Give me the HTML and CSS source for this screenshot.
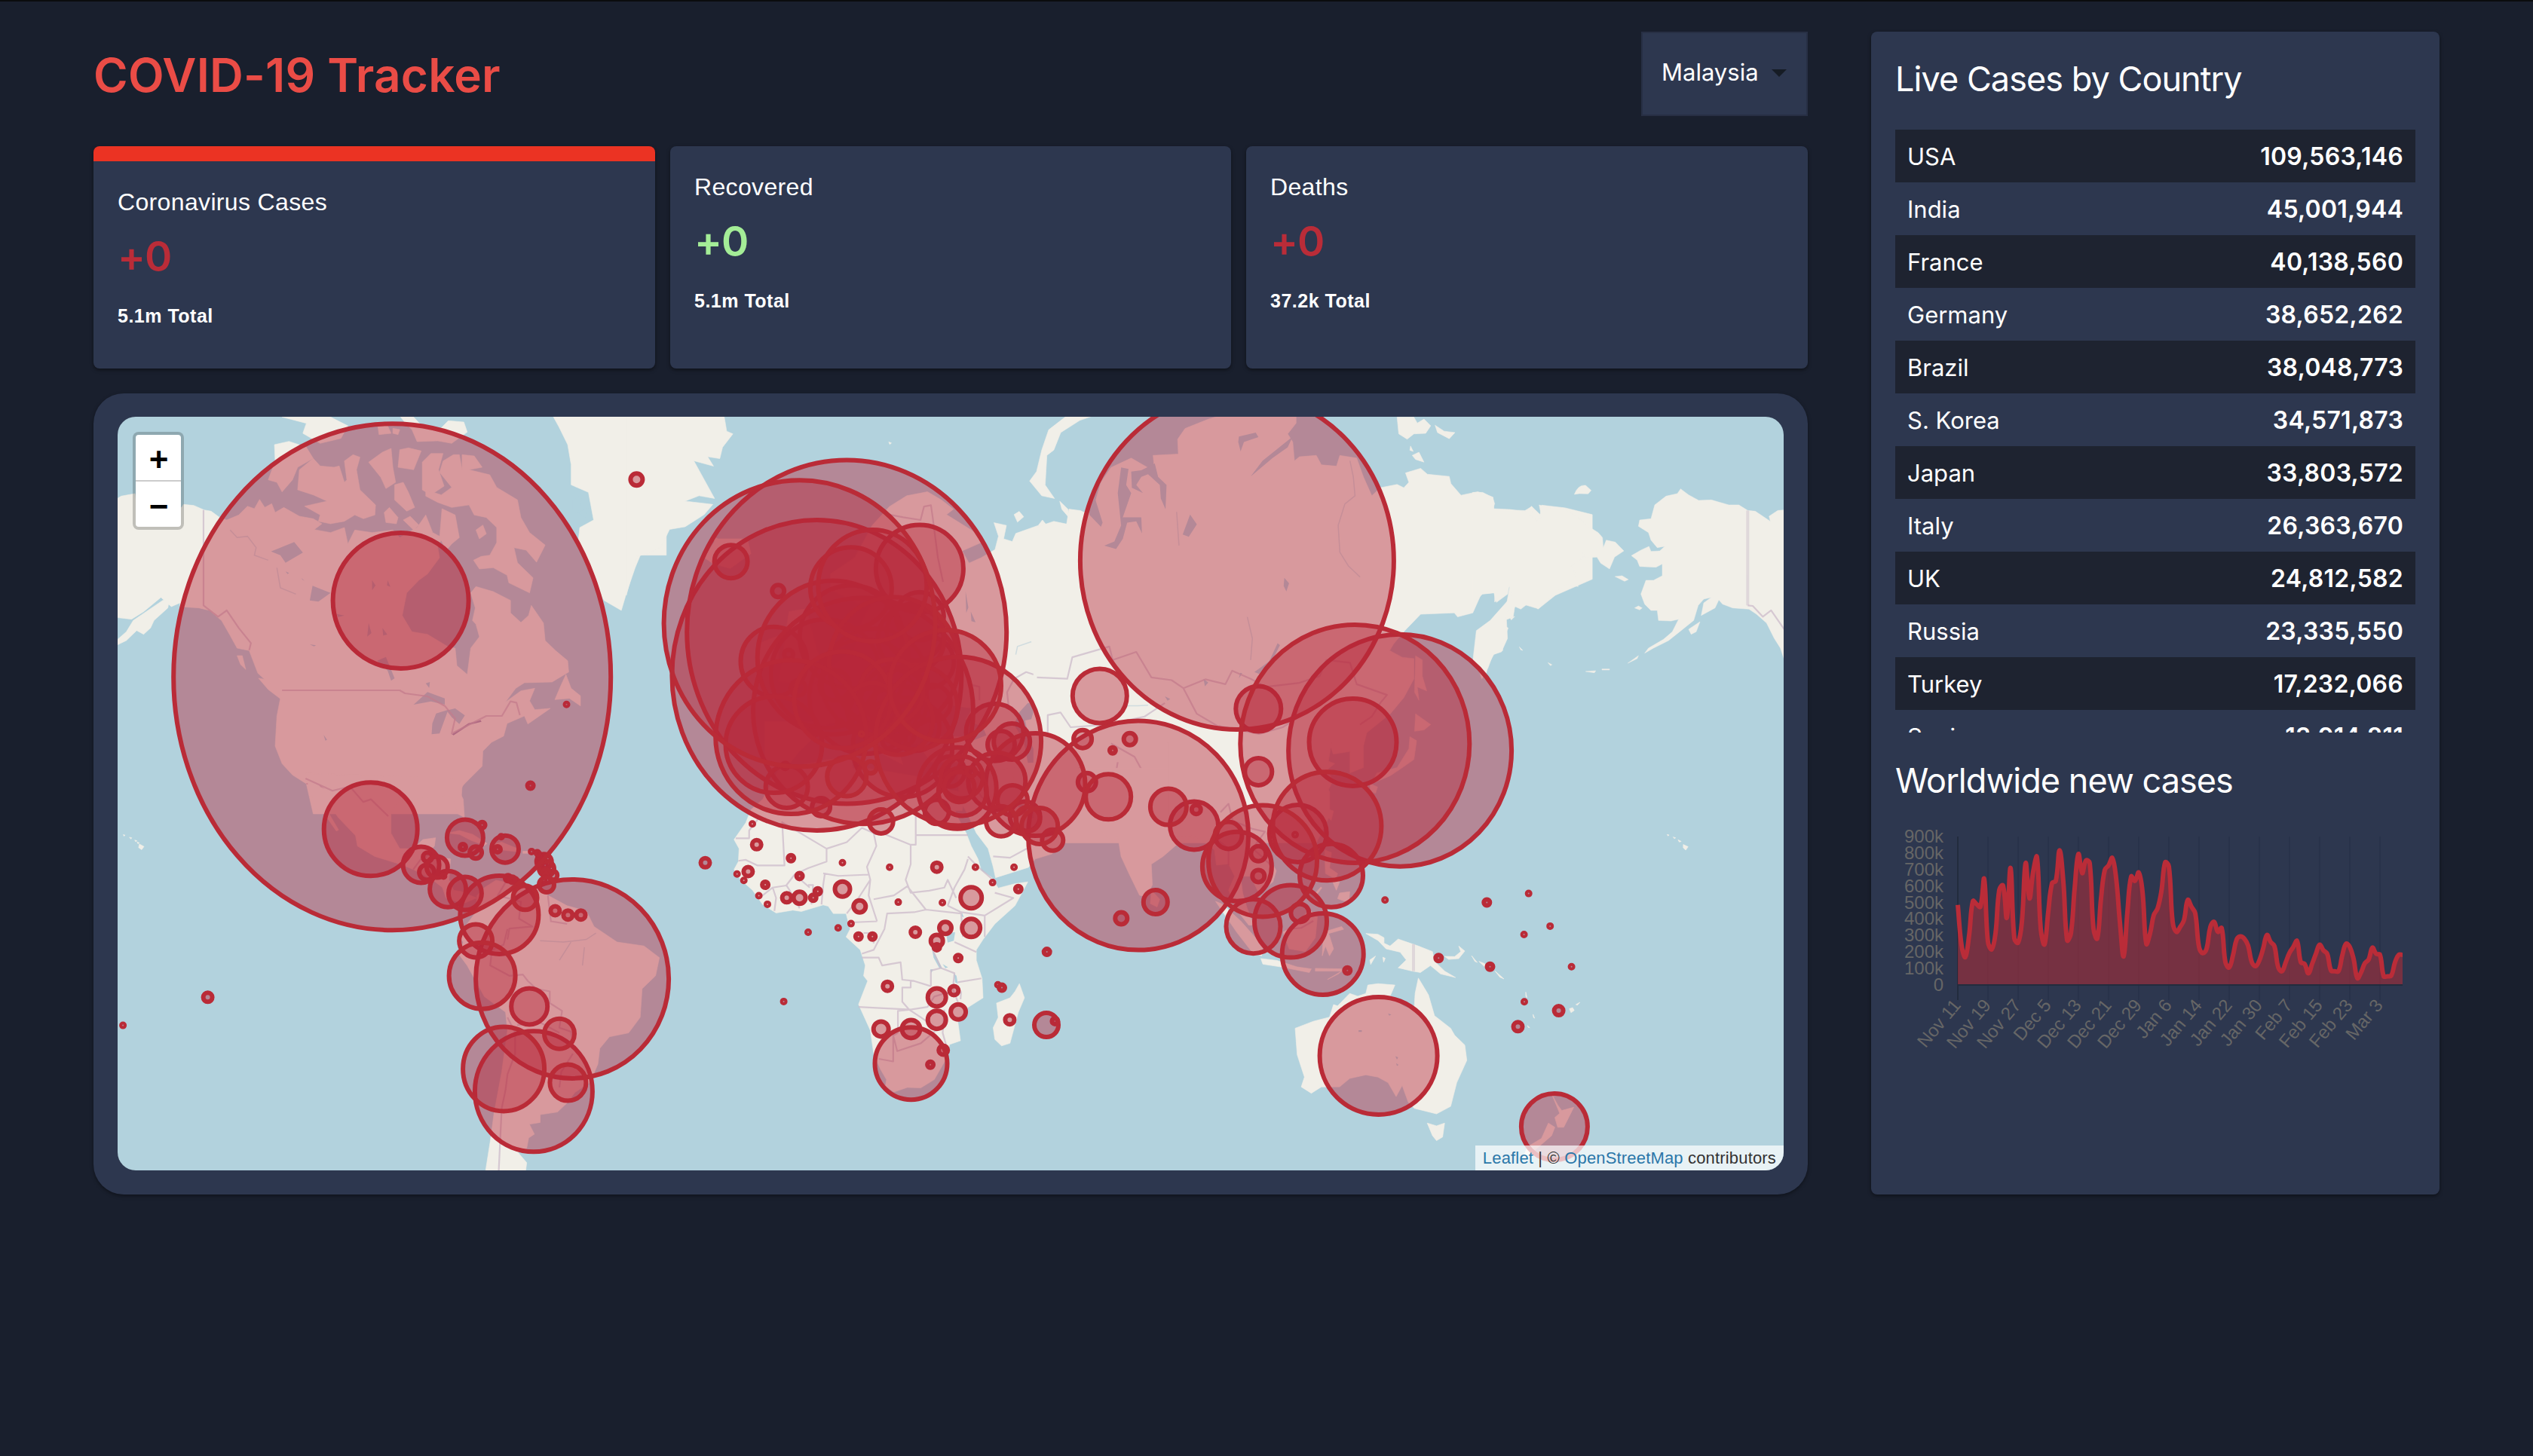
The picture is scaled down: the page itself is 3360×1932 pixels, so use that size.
FILE: index.html
```html
<!DOCTYPE html>
<html lang="en">
<head>
<meta charset="utf-8">
<title>COVID-19 Tracker</title>
<link rel="stylesheet" href="styles.css">
</head>
<body>
<div class="app">
  <main class="left">
    <header class="header">
      <h1 class="title">COVID-19 Tracker</h1>
      <div class="select"><span>Malaysia</span><svg class="select-arrow" viewBox="0 0 20 10"><path d="M0 0H20L10 10Z"/></svg></div>
    </header>
    <section class="stats">
      <article class="card card-active"><p class="card-label">Coronavirus Cases</p><h2 class="card-value red">+0</h2><p class="card-total">5.1m Total</p></article>
      <article class="card"><p class="card-label">Recovered</p><h2 class="card-value green">+0</h2><p class="card-total">5.1m Total</p></article>
      <article class="card"><p class="card-label">Deaths</p><h2 class="card-value red">+0</h2><p class="card-total">37.2k Total</p></article>
    </section>
    <section class="map-card">
      <div class="map">
        <svg class="world" viewBox="156 553 2210 1000">
          <!-- North America, Greenland -->
          <g transform="translate(140 540) scale(.45918 .33333)">
            <g class="land">
              <path d="M10 385L45 355 85 345 90 400 220 400 225 388 255 392 285 410 305 415 330 440 350 450 385 430 410 395 430 405 445 368 460 400 480 385 490 420 515 400 560 435 600 445 625 465 603 488 650 500 690 480 700 545 720 490 770 500 830 490 850 520 900 480 925 430 945 500 972 520 960 560 965 600 930 665 905 690 870 740 857 830 885 895 930 905 990 955 1010 960 1015 1030 1045 1065 1055 960 1080 915 1070 865 1060 850 1068 800 1055 740 1070 715 1120 735 1170 770 1170 820 1200 858 1222 830 1230 790 1265 860 1270 930 1300 970 1335 1010 1338 1055 1290 1095 1210 1098 1185 1120 1155 1175 1200 1130 1240 1120 1225 1170 1240 1205 1285 1200 1220 1262 1210 1230 1160 1260 1150 1310 1115 1335 1090 1370 1088 1430 1030 1510 1025 1620 600 1620 580 1500 540 1465 510 1420 490 1350 495 1230 505 1160 480 1110 440 1060 415 970 380 960 360 910 335 850 300 810 270 800 215 795 215 780 190 795 160 758 110 815 75 845 10 835Z"/>
              <path d="M10 955L60 895 80 850 165 770 185 765 180 800 140 850 130 880 110 905 90 890 60 930 30 950Z"/>
              <path d="M1330 1065L1315 1110 1298 1165 1340 1160 1372 1190 1372 1150 1345 1120Z"/>
              <path d="M442 1080L465 1085 510 1140 508 1165 470 1125Z"/>
              <path d="M380 990L395 990 405 1045 390 1025Z"/>
              <path d="M560 250L600 205 620 235 660 240 675 235 690 300 697 290 690 215 715 190 735 200 725 250 735 330 780 390 778 430 745 445 720 430 690 455 650 465 615 455 620 430 575 395 640 375 600 350 555 330Z"/>
              <path d="M488 150L530 137 580 160 600 205 555 240 540 290 510 338 495 300 470 290 490 215Z"/>
              <path d="M760 220L800 180 825 165 830 240 838 300 810 325 795 280Z"/>
              <path d="M850 170L875 163 912 175 890 250 845 240Z"/>
              <path d="M835 310L860 300 875 340 893 400 870 415 835 370Z"/>
              <path d="M805 420L820 400 845 440 840 465 810 460Z"/>
              <path d="M860 450L880 435 905 470 890 490Z"/>
              <path d="M915 220L940 185 975 185 962 250 978 315 940 350 915 330Z"/>
              <path d="M975 215L1005 190 1022 190 1030 250 1030 190 1065 195 1088 240 1050 250 1110 270 1130 320 1190 370 1200 440 1225 500 1270 550 1245 618 1215 570 1180 560 1190 620 1235 680 1225 740 1165 700 1160 670 1120 640 1080 645 1063 610 1085 595 1110 590 1130 540 1130 480 1100 440 1065 430 1050 390 1000 400 960 380 925 355 925 330 970 350 1000 320 965 260Z"/>
              <path d="M972 405L1010 430 1022 520 1000 545 985 570 965 520Z"/>
              <path d="M1070 490L1090 470 1100 505 1080 525Z"/>
              <path d="M510 40L650 40 700 75 680 125 620 145 570 105 580 65Z"/>
              <path d="M785 60L815 75 825 105 790 110ZM830 85L850 90 845 110 830 105Z"/>
              <path d="M850 36L890 40 910 70 965 90 990 55 1035 60 1045 100 1000 145 960 135 900 138 885 90 870 70Z"/>
              <path d="M1290 30L1310 80 1335 150 1345 230 1345 310 1395 340 1410 450 1370 480 1365 540 1395 650 1440 770 1490 810 1505 740 1530 640 1545 590 1620 590 1620 30Z"/>
            </g>
            <g class="water">
              <path d="M890 1185L930 1135 980 1160 980 1185 940 1172ZM955 1220L990 1205 965 1300 942 1303 944 1260ZM985 1208L1010 1200 1038 1228 1022 1262 1000 1235ZM478 575L545 538 570 580 520 620 505 590ZM590 770L598 712 650 740 615 775ZM785 1010L810 995 835 1080 825 1090 815 1050ZM925 1100L937 1095 935 1118ZM630 1305L640 1325 635 1328ZM1350 370L1380 345 1365 420 1395 400 1385 440 1350 410Z"/>
              <path d="M565 680l10 12-6-4ZM520 655l10 6-4 4ZM590 945l18 4-6 4ZM770 690l10 20-10 20ZM815 690l8 26-10-6ZM690 830l-22-6 4 12ZM760 860l8 40-12 14ZM800 880l14 26-12 4Z"/>
              <path class="lake-line" d="M1003 1305L1050 1262 1085 1250"/>
            </g>
            <path class="border" d="M510 1128H850L865 1140 930 1152 980 1190 1010 1240 1000 1300 1050 1265 1100 1230 1145 1230 1170 1172 1187 1177 1197 1227M283 410V790L325 835 350 810 385 880 420 940 415 968M580 1500H605L650 1527H695L735 1570"/>
            <path class="river" d="M360 490L380 520 410 515 435 560 430 590 470 610M495 640L505 720 550 745"/>
          </g>
          <!-- Central and South America -->
          <g transform="translate(140 1040) scale(.5102 .34436)">
            <g class="land">
              <path d="M520 -40L530 20 550 100 565 108 600 182 606 178 575 100 562 40 555 0 570 20 575 65 605 130 650 200 655 240 700 280 770 312 800 330 850 370 876 400 885 440 930 462 965 440 925 415 905 410 893 370 897 290 860 280 832 278 855 240 858 208 825 215 800 250 765 250 742 190 742 110 760 72 820 55 880 47 902 50 915 115 933 130 930 60 920 30 940 -20Z"/>
              <path d="M965 432L985 400 1015 372 1035 378 1060 395 1090 390 1115 395 1150 430 1200 470 1250 490 1270 550 1330 610 1400 625 1440 670 1430 740 1395 790 1390 900 1360 960 1310 975 1285 1020 1280 1080 1260 1150 1220 1190 1200 1230 1175 1265 1130 1275 1130 1305 1102 1312 1115 1350 1100 1365 1095 1405 1072 1420 1095 1460 1090 1520 985 1520 1000 1380 1010 1270 1030 1110 1045 950 1040 880 985 820 940 700 920 660 930 610 920 590 940 540 965 490Z"/>
              <path d="M890 190L920 180 955 195 992 230 985 238 950 218 920 195ZM1005 232L1030 225 1075 252 1070 262 1030 255 1005 258ZM1085 260h14v8h-14ZM955 255h20l2 8h-20Z"/>
              <path d="M88 232l12 10-6 12-8-8ZM62 206l6 2-2 5ZM46 196l5 2-3 4ZM76 217l6 3-4 3ZM82 224l6 4-4 3Z"/>
            </g>
            <path class="border" d="M520 -20L590 27 635 10 670 70 690 60 735 125M1045 560L1035 620 1005 640 1000 700 1050 740 1085 735 1098 760 1120 790 1155 800 1155 845 1187 875 1180 940 1210 955 1215 990M1045 900L1065 960 1065 1040 1045 1120 1040 1180 1030 1250 1022 1500M1040 380L1020 430 1080 455 1075 520 1110 550 1050 558 1045 600M1150 430L1158 530 1200 540M1215 1040L1185 1110 1180 1170M1070 930L1130 920 1180 960M800 330L820 290 835 280M850 370L895 340"/>
            <path class="river" d="M1130 605L1190 610 1250 600 1275 575M1180 680L1210 610M1240 700L1245 630"/>
          </g>
          <!-- Greenland east, Europe, western Asia -->
          <g transform="translate(840 540) scale(.45918 .35714)">
            <g class="land">
              <path d="M-20 30L262 30 270 90 288 100 258 150 250 192 215 185 232 220 175 200 235 340 190 330 150 350 230 362 205 400 150 445 105 455 80 520 40 545 10 555 -20 700Z"/>
              <path d="M1255 30L1335 30 1290 50 1235 95 1215 160 1195 180 1190 290 1217 340 1180 330 1145 275 1165 240 1180 160 1200 85Z"/>
              <path d="M1100 400L1115 388 1128 408 1110 428ZM1232 350l24 30 2 30-20-30ZM738 130l8 4-5 5Z"/>
              <path d="M205 560L235 500 225 480 245 490 330 490 340 545 280 600 230 582Z"/>
              <path d="M640 560L690 440 740 370 790 330 850 315 890 345 925 380 905 400 980 460 1012 500 950 535 970 580 1005 560 1045 530 1055 480 1042 430 1078 440 1070 490 1095 500 1105 470 1170 440 1182 420 1195 440 1255 435 1260 380 1320 395 1700 440 1700 1530 1220 1530 1060 1440 1050 1400 960 1430 950 1500 800 1500 560 1600 330 1600 320 1568 410 1400 440 1360 380 1330 380 1170 520 1170 500 1060 560 980 640 900 660 800 700 700 650 730 570 680 570 620Z"/>
              <path d="M420 1020L450 760 500 750 530 900 560 990 520 1030ZM360 880L420 850 420 950 360 980Z"/>
            </g>
            <g class="water">
              <path d="M443 1340L560 1310 630 1300 640 1400 760 1440 800 1400 950 1430 960 1320 860 1320 820 1250 800 1260 740 1180 780 1330 720 1290 650 1160 560 1180 480 1280Z"/>
              <path d="M860 1220L870 1150 920 1110 980 1120 960 1160 1010 1190 1020 1220 980 1240 950 1225Z"/>
              <path d="M1115 1135L1140 1100 1162 1105 1150 1160 1132 1165 1145 1240 1175 1320 1140 1322 1128 1240 1100 1180ZM960 685l8 60-6 20ZM975 760l14 40-12-4ZM1180 1210l20 10-4 20Z"/>
            </g>
            <path class="border" d="M1085 1120L1080 1060 1100 1010 1135 985 1195 1010 1250 1012 1265 930 1375 890 1385 935 1455 910 1500 1005 1570 1030M1200 1210V1145L1235 1135 1265 1170 1300 1240M1180 1310L1230 1290 1265 1330M740 400L780 410 830 420 840 370 860 365 865 410 880 560 895 650M970 1030L1000 1040 1000 1090M1380 1250L1400 1330 1470 1365 1490 1430"/>
            <path class="river" d="M1105 920L1110 890 1150 872M1175 845l12-18"/>
          </g>
          <!-- Northern and eastern Asia -->
          <g transform="translate(1380 540) scale(.44643 .35714)">
            <g class="land">
              <path d="M-20 450L40 425 78 435 85 380 120 385 150 410 180 280 210 225 270 190 340 240 335 180 410 175 408 120 430 80 500 45 540 30 760 30 760 60 735 100 750 130 755 200 770 185 820 180 835 215 880 220 890 180 940 190 960 260 985 330 1010 300 1060 288 1080 300 1095 280 1085 245 1130 228 1150 250 1215 258 1220 285 1250 328 1300 315 1345 335 1348 380 1440 385 1460 370 1485 400 1490 365 1560 375 1640 400 1640 640 1530 700 1480 750 1440 735 1410 740 1405 780 1385 790 1388 860 1370 910 1345 920 1330 970 1312 1010 1298 960 1293 900 1310 840 1350 780 1385 735 1395 665 1350 725 1350 690 1310 695 1285 765 1240 780 1230 765 1130 770 1080 835 1050 880 1038 905 1075 930 1110 935 1110 1010 1080 1080 1040 1140 1000 1180 970 1210 960 1260 960 1340 920 1360 920 1280 870 1290 860 1250 810 1290 830 1305 875 1325 830 1370 860 1430 860 1520 820 1620 -20 1620Z"/>
              <path d="M1115 925L1135 940 1135 1000 1148 1055 1120 1040 1125 1090 1112 1060ZM1115 1140L1160 1180 1140 1200 1112 1205ZM1098 1225L1118 1240 1110 1310 1070 1345 1040 1370 985 1400 1000 1360 1060 1340 1095 1270ZM980 1400l22 12-6 24-16-10Z"/>
              <path d="M1060 38L1110 38 1120 60 1140 45 1160 70 1145 98 1110 100 1090 120 1065 100ZM1173 68L1200 90 1232 95 1215 118 1180 95ZM1100 145l8 20-10-4ZM1105 180L1125 168 1140 205 1115 195Z"/>
            </g>
            <g class="water">
              <path d="M240 225L262 230 255 290 270 320 245 410 300 410 302 470 285 425 258 430 245 490 225 528 190 515 220 500 240 440 230 320ZM160 330L185 430 180 445 145 400ZM270 240L300 235 340 210 350 260 375 290 372 380 358 340 355 290 320 250 300 260 285 290 305 320 272 300Z"/>
              <path d="M705 878L712 885 690 940 650 992 636 985 680 945ZM590 110L640 95 648 112 605 130 595 165 588 130ZM660 200L720 140 750 110 735 150 690 190 625 258ZM725 635l14 20-8 30-8-20ZM445 400l20 36-24 46-18-8ZM485 1010l14 14-10 14ZM370 1075l16 10-8 6ZM600 990l-10 18 4-20Z"/>
            </g>
            <path class="border" d="M-10 1005L80 1010 95 930 205 890 215 940 285 910 330 1005 390 1015 425 1045 465 1140 530 1188M425 1045L490 1012 550 1030 570 980 625 1010 670 1040 770 1025 830 1000M530 1185L650 1215 720 1190 770 1150M830 1000L850 940 920 950 940 1030 1030 1070 1010 1100 985 1150 950 1180M85 1440L85 1370 130 1330M210 1250L280 1300 315 1380 325 1400 380 1450 500 1480 560 1480M22 1210V1145L60 1135 90 1190 200 1180 310 1150 370 1100M230 1320L220 1390 270 1440 210 1520"/>
            <path class="river" d="M920 200L930 260 935 330 905 360 885 440 890 540 915 590 950 632M615 780L630 860 625 940M405 390L412 515M245 1110H290L320 1108"/>
          </g>
          <!-- Bering Sea and the second Alaska -->
          <g transform="translate(1960 540) scale(.33333)">
            <g class="land">
              <path d="M-20 340L20 340 60 360 68 385 62 405 130 408 190 418 215 395 225 410 208 430 235 452 255 440 245 390 290 402 340 402 400 440 440 475 480 500 497 520 500 560 512 530 548 538 582 573 545 598 525 645 490 622 475 598 430 600 415 575 420 600 370 635 385 655 400 715 355 705 300 745 240 805 230 785 195 787 172 805 150 795 120 810 102 870 122 880 98 935 100 970 65 985 40 1030 35 1060 -20 1020 -5 890 50 850 130 760 150 712 125 715 120 745 75 778 65 740 20 745 -20 780Z"/>
              <path d="M385 348Q400 308 430 312L452 332 440 346 405 345ZM547 675L575 672 600 687 585 694ZM625 800l15-8 15 8-10 8Z"/>
              <path d="M612 592L650 570 682 555 690 575 725 573 745 555 715 560 690 530 680 500 640 475 645 450 690 445 705 390 750 355 795 345 808 326 840 350 880 372 930 370 1000 390 1040 390 1075 412 1105 415 1165 455 1160 435 1195 412 1225 410 1225 1020 1205 960 1180 920 1150 860 1110 825 1080 805 1015 800 975 785 960 768 945 800 890 830 900 780 930 758 900 765 878 790 860 850 810 890 760 930 700 960 665 980 680 960 740 925 775 895 800 845 770 852 720 850 715 810 690 810 665 785 650 745 670 690 700 690 735 672 735 625 710 638 645 635 635 610Z"/>
              <path d="M840 885L885 855 870 895 850 905ZM598 1020L640 990 635 1002ZM430 1053L470 1050 465 1058ZM495 1043h30v4h-30ZM280 1018l16 8-6 4ZM166 955l14 14-8-2ZM130 840l18-6-14 14Z"/>
            </g>
            <path class="border wide" d="M1075 412V790"/>
            <path class="border" d="M1075 790L1095 792 1135 835 1168 810 1220 885"/>
          </g>
          <!-- Africa, Arabia, India -->
          <g transform="translate(900 1040) scale(.44643 .34436)">
            <g class="land">
              <path d="M300 -60L250 60 215 100 200 150 165 215 180 250 178 300 165 330 185 370 220 410 250 465 290 498 340 487 365 492 430 467 445 472 460 500 498 500 510 560 498 590 540 640 555 700 550 740 562 760 535 850 570 950 580 1040 600 1100 618 1140 615 1165 640 1188 680 1170 720 1172 760 1140 800 1050 805 1005 838 990 830 915 860 862 905 825 902 750 885 680 885 640 905 600 940 540 1000 470 1038 378 1000 385 950 402 930 360 900 335 890 290 870 240 855 190 830 130 810 60 800 -10 700 -30 560 -60Z"/>
              <path d="M830 -40L835 60 860 120 885 190 920 250 935 320 942 362 1040 322 1060 290 1110 270 1150 210 1130 180 1085 145 1040 130 1010 90 990 40 1000 -60Z"/>
              <path d="M990 -60L1010 60 1050 100 1090 120 1130 125 1170 140 1230 135 1250 160 1275 165 1258 185 1290 222 1305 200 1315 280 1340 350 1370 430 1390 435 1408 390 1405 310 1440 280 1480 235 1520 208 1650 215 1650 -60Z"/>
              <path d="M1405 410L1430 445 1422 475 1402 462ZM1013 770L1028 825 1010 880 985 1000 960 1010 940 985 935 940 950 900 945 845 985 825 1000 800Z"/>
            </g>
            <g class="water">
              <path d="M795 575L822 572 818 605 800 612ZM754 640L764 660 784 712 775 710 758 670ZM818 730L826 740 830 770 822 765ZM842 495l6 20-6-4ZM748 715h8l-4 14ZM785 695l16 12-8 4Z"/>
            </g>
            <path class="border" d="M170 210H210V180L240 130M308 145L315 315H235L200 293 178 297M310 150L440 250 500 225 545 170M440 250V300L385 325 345 350 320 392 280 400 240 440M545 170L580 190 588 240 560 320 570 370 565 430 590 530M690 235L605 190 580 195M690 235V310L675 370 690 420 745 412 790 400 800 370 825 440M705 120V198H860M705 198V235H690M430 345L475 355 565 350M435 345L430 390 425 465M385 390L400 390 395 465M320 390L330 410 360 480M345 350L390 400M280 400L290 440 285 490M570 370L535 440 500 500M590 530L500 535M580 445L640 430 680 395 735 485 700 495 620 500 612 560 580 640 545 655M800 470L840 495 910 508 995 440 940 420M735 485L840 500 845 590M860 290L850 330 820 400 800 470M860 280L890 320 930 365M910 508V590M820 610L885 648M545 670H595L605 700 660 688 665 755 700 760 750 780M755 640L780 710 750 720 750 780M780 710L820 730 815 790 830 840M830 765L900 750M690 755V785H665V840L685 870M535 860L610 865 690 870 740 860 760 820 810 800M652 960V875L690 870M652 960L638 970V1070L595 1060M638 970L650 1030 720 1000 770 945 720 900 685 870M790 870L785 960 795 1005M935 280L985 285 1035 250M840 800L838 830M550 575H580V615M870 -10L900 50 960 120"/>
          </g>
          <!-- South-east Asia and Oceania -->
          <g transform="translate(1560 1000) scale(.53571 .37)">
            <g class="land">
              <path d="M-20 -40L-20 300 45 295 75 320 95 345 100 400 130 395 145 440 130 490 150 560 180 615 192 615 175 550 165 500 160 440 185 440 205 500 240 460 248 420 230 370 205 320 215 270 250 262 330 210 370 150 388 100 375 50 385 -40Z"/>
              <path d="M98 530L115 540 160 600 215 690 212 725 190 715 150 640ZM210 735L250 742 300 765 335 772 330 785 260 765 215 755ZM265 640L300 610 330 560 350 585 345 660 320 710 280 700ZM365 640L410 620 415 630 378 645 390 700 380 725 370 690 362 725ZM345 770L410 772 410 780 345 780ZM375 810L410 780 402 790Z"/>
              <path d="M368 345L385 355 380 410 400 430 395 450 370 430ZM385 450l20 10-8 30ZM405 500L430 495 428 535 400 520ZM345 500l14-22 2 4-12 22ZM378 200l12 6-6 34-8-14ZM235 295l12-6 2 16-12 4Z"/>
              <path d="M470 645L500 648 515 660 515 680 530 690 550 665 600 690 635 710 640 745 665 780 692 803 655 790 630 760 605 785 585 780 550 768 570 740 555 712 520 700 500 670ZM665 727L690 728 705 710 700 690 715 708 700 735 675 738ZM732 725l14 24-6-4ZM750 745l14 8 10 20-8-6ZM790 780l16 20 6 8-10-6ZM480 740l14-14-12 30ZM512 730l6 4-4 14Z"/>
              <path d="M295 985L340 960 380 945 390 900 400 905 430 860 450 870 470 860 475 830 500 825 542 830 530 870 590 910 592 860 600 805 625 865 640 940 680 985 690 1010 715 1045 720 1100 695 1180 680 1265 645 1292 590 1272 575 1250 560 1190 545 1230 525 1180 500 1160 470 1152 430 1165 405 1195 360 1195 335 1218 310 1195 318 1160 300 1080Z"/>
              <path d="M622 1325L645 1335 665 1325 660 1375 645 1388 635 1370ZM930 1220L945 1260 955 1280 985 1268 960 1340 945 1340 938 1305 950 1290ZM922 1325L938 1340 930 1370 890 1420 880 1450 860 1448 870 1410 905 1380Z"/>
              <path d="M974 915l8-4 4 10-8 8ZM990 900l10-8-6 10ZM866 855l3 20-3-4ZM884 935l4 14-3-3ZM870 975l6 8-4-1Z"/>
              <path d="M1256 326l12 8-6 12-6-8ZM1231 299l6 3-3 3ZM1216 290l5 2-3 3ZM1243 309l8 6-5 2Z"/>
            </g>
            <path class="border wide" d="M588 683V780"/>
            <path class="border" d="M110 210L130 180 140 240 190 270 220 280 190 340 235 400M95 300L130 340 130 400M270 630L310 625 340 600"/>
            <g class="water"><path d="M538 880l36 8 14 26-20-6ZM452 992h8v6h-8ZM543 1085l7 4-3 8ZM545 1110l6 6-4 4ZM525 932l8 4-5 4Z"/></g>
          </g>
          <g id="outbreaks" class="outbreaks"></g>
        </svg>
        <div class="zoom"><span class="zoom-btn">+</span><span class="zoom-btn">−</span></div>
        <div class="attribution"><span class="link">Leaflet</span> | © <span class="link">OpenStreetMap</span> contributors</div>
      </div>
    </section>
  </main>
  <aside class="right">
    <h3 class="panel-title">Live Cases by Country</h3>
    <div class="table">
      <div class="row"><span>USA</span><strong>109,563,146</strong></div>
      <div class="row"><span>India</span><strong>45,001,944</strong></div>
      <div class="row"><span>France</span><strong>40,138,560</strong></div>
      <div class="row"><span>Germany</span><strong>38,652,262</strong></div>
      <div class="row"><span>Brazil</span><strong>38,048,773</strong></div>
      <div class="row"><span>S. Korea</span><strong>34,571,873</strong></div>
      <div class="row"><span>Japan</span><strong>33,803,572</strong></div>
      <div class="row"><span>Italy</span><strong>26,363,670</strong></div>
      <div class="row"><span>UK</span><strong>24,812,582</strong></div>
      <div class="row"><span>Russia</span><strong>23,335,550</strong></div>
      <div class="row"><span>Turkey</span><strong>17,232,066</strong></div>
      <div class="row"><span>Spain</span><strong>13,914,811</strong></div>
    </div>
    <h3 class="panel-title chart-title">Worldwide new cases</h3>
    <svg id="chart" class="chart" viewBox="0 0 690 345"></svg>
  </aside>
</div>
<script src="app.js"></script>
</body>
</html>
```
FILE: styles.css
```css
* { box-sizing: border-box; margin: 0; padding: 0; }
body { background: #191f2d; color: #fff; font-family: Inter, "Liberation Sans", sans-serif; }
.app { display: flex; justify-content: space-between; align-items: flex-start; height: 1932px; padding: 40px 124px 0; border-top: 2px solid #0b0c0e; }
.left { width: 2274px; display: flex; flex-direction: column; }
.header { display: flex; justify-content: space-between; height: 152px; }
.title { font-size: 62px; font-weight: 600; line-height: 116px; color: #ea4c46; letter-spacing: 0.2px; }
.select { display: flex; justify-content: space-between; width: 221px; height: 112px; padding: 0 26px 6px 25px; align-items: center; background: #2d374f; border: 2px solid #272f44; font-size: 31px; }
.select-arrow { width: 20px; height: 10px; fill: #161c25; margin-top: 4px; }
.stats { display: grid; grid-template-columns: 745px 744px 745px; gap: 20px; height: 295px; }
.card { background: #2d374f; border-radius: 8px; padding: 32px; box-shadow: 0 2px 5px rgba(0,0,0,.45); }
.card-active { border-top: 20px solid #eb3323; }
.card-label { font: 400 32px/44px "Liberation Sans", sans-serif; letter-spacing: .35px; }
.card-value { font-size: 55px; font-weight: 600; line-height: 64px; margin-top: 18px; letter-spacing: -1px; }
.red { color: #ba2c38; }
.green { color: #a4ed97; }
.card-total { font: 700 25px/32px "Liberation Sans", sans-serif; margin-top: 31px; letter-spacing: .5px; }
.map-card { margin-top: 33px; height: 1063px; padding: 31px 32px; background: #2d374f; border-radius: 40px; box-shadow: 0 2px 5px rgba(0,0,0,.4); }
.map { position: relative; height: 1000px; border-radius: 24px; overflow: hidden; background: #b2d2dd; }
.world { display: block; width: 2210px; height: 1000px; }
.land { fill: #f1efe8; stroke: #f1efe8; stroke-width: 1.5; stroke-linejoin: round; }
.water { fill: #b2d2dd; }
.lake-line { fill: none; stroke: #a99bb9; stroke-width: 7; }
.border { fill: none; stroke: #cdbccb; stroke-width: 2.2px; vector-effect: non-scaling-stroke; stroke-linejoin: round; opacity: .75; }
.wide { stroke: #d9d0d6; stroke-width: 4px; }
.river { fill: none; stroke: #c3d5dc; stroke-width: 1.5px; vector-effect: non-scaling-stroke; opacity: .7; }
.outbreaks { fill: #b8283a; fill-opacity: .43; stroke: #ba2b37; stroke-width: 6; }
.zoom { position: absolute; left: 20px; top: 20px; width: 68px; border: 4px solid rgba(0,0,0,.2); background-clip: padding-box; background-color: #fff; border-radius: 8px; }
.zoom-btn { display: block; height: 60px; padding-left: 1px; color: #000; text-align: center; font: 700 44px/66px "Liberation Sans", sans-serif; }
.zoom-btn:first-child { height: 62px; border-bottom: 2px solid #ccc; }
.attribution { position: absolute; right: 0; bottom: 0; height: 33px; padding: 0 10px; background: rgba(255,255,255,.7); color: #333; font: 400 22px/34px "Liberation Sans", sans-serif; letter-spacing: .17px; white-space: nowrap; }
.link { color: #2a77a9; }
.right { width: 754px; height: 1543px; padding: 32px; background: #2d374f; border-radius: 8px; box-shadow: 0 2px 5px rgba(0,0,0,.45); }
.panel-title { font-size: 45px; font-weight: 400; line-height: 62px; letter-spacing: -.95px; }
.table { margin-top: 36px; height: 800px; overflow: hidden; }
.row { display: flex; justify-content: space-between; align-items: center; height: 70px; padding: 0 16px; font-size: 31px; }
.row:nth-child(odd) { background: #1e2330; }
.row strong { font-size: 32px; font-weight: 600; letter-spacing: .25px; }
.chart-title { margin-top: 33px; }
.chart { display: block; width: 690px; height: 345px; margin-top: 29px; overflow: visible; }
.chart text { font: 24px "Liberation Sans", sans-serif; fill: #666; }
.grid { stroke: #28324a; stroke-width: 2; }
.axis { stroke: #232c3e; stroke-width: 2; }
.area { fill: #ba2c38; fill-opacity: .52; }
.line { fill: none; stroke: #ba2c38; stroke-width: 6; stroke-linejoin: round; }
```
FILE: app.js
```js
const NS = 'http://www.w3.org/2000/svg';
function add(parent, tag, attrs, text) {
  const el = document.createElementNS(NS, tag);
  for (const k in attrs) el.setAttribute(k, attrs[k]);
  if (text !== undefined) el.textContent = text;
  parent.appendChild(el);
}

// lat, lng, total cases for every reporting country
const countries = [
[33,65,234174],[41,20,334863],[28,3,272010],[42.5,1.6,48015],[-12.5,18.5,107327],[18.25,-63.17,3904],[17.05,-61.8,9106],[-34,-64,10128845],[40,45,452273],[12.5,-69.97,44224],
[-27,133,11400000],[47.33,13.33,6081287],[40.5,47.5,835757],[24.25,-76,38084],[26,50.55,696614],[24,90,2049377],[13.17,-59.53,110578],[53,28,994037],[50.83,4,4861695],[17.25,-88.75,71409],
[9.5,2.25,28036],[32.33,-64.75,18860],[27.5,90.5,62697],[-17,-65,1212131],[44,18,403638],[-22,24,330638],[-10,-55,38048773],[18.5,-64.5,7305],[4.5,114.67,343719],[43,25,1329266],
[13,-2,22114],[-3.5,30,54569],[16,-24,64474],[13,105,139068],[6,12,125246],[60,-95,4650000],[7,21,15440],[12.15,-68.27,11922],[19.5,-80.5,31472],[15,19,7701],
[49.37,-2.36,101717],[-30,-71,5384853],[35,105,503302],[4,-72,6394361],[-12.17,44.25,9109],[-1,15,25227],[-21.23,-159.77,7203],[10,-84,1238883],[45.17,15.5,1317144],[21.5,-80,1113662],
[12.17,-68.97,45883],[35,33,681110],[49.75,15.5,4759286],[8,-5,88455],[0,25,100984],[56,10,3442484],[0,0,721],[11.5,43,15690],[15.42,-61.33,16047],[19,-70.67,661103],[-2,-77.5,1077445],
[27,30,516023],[13.83,-88.92,201985],[2,10,17229],[15,39,10189],[59,26,613954],[-26.5,31.5,75191],[8,38,501239],[62,-7,34658],[-18,175,69047],[64,26,1499712],
[46,2,40138560],[4,-53,98041],[-15,-140,79451],[-1,11.75,49056],[13.47,-16.57,12626],[42,43.5,1863615],[51,9,38652262],[8,-2,172210],[36.13,-5.35,20550],[39,22,6101379],
[72,-40,11971],[12.12,-61.67,19693],[16.25,-61.58,203235],[15.5,-90.25,1250394],[11,-10,38572],[12,-15,9614],[5,-59,74492],[19,-72.42,34667],[15,-86.5,474590],[22.3,114.2,2937609],
[47,20,2230232],[65,-18,209906],[20,77,45001944],[-5,120,6829221],[32,53,7627186],[33,44,2465545],[53,-8,1734582],[54.23,-4.55,38008],[31.5,34.75,4841558],[42.83,12.83,26363670],
[18.25,-77.5,156869],[36,138,33803572],[31,36,1746997],[48,68,1370000],[1,38,344130],[1.42,173,5085],[29.34,47.66,667290],[41,75,88953],[18,105,219060],[57,25,977765],
[33.83,35.83,1243838],[-29.5,28.5,36138],[6.5,-9.5,8090],[25,17,507269],[47.17,9.53,21574],[56,24,1389244],[49.75,6.17,392766],[22.17,113.55,3514],[-20,47,68486],[-13.5,34,89168],
[2.5,112.5,5278406],[3.25,73,186694],[17,-4,33164],[35.83,14.58,122488],[9,168,16138],[14.67,-61,230354],[20,-12,63848],[-20.28,57.55,44000],[-12.83,45.17,42027],[23,-102,7702809],
[6.92,158.25,31765],[47,29,635396],[43.73,7.4,17181],[46,105,1011489],[42.5,19.3,251280],[16.75,-62.2,1403],[32,-5,1279115],[-18.25,35,233843],[22,98,643215],[-22,17,172511],
[-0.53,166.92,5393],[28,84,1003450],[52.5,5.75,8643000],[-21.5,165.5,80203],[-41,174,2624525],[13,-85,18975],[16,8,9530],[10,8,267188],[7.5,134.5,6372],[41.83,22,350589],[40,127,4772813],
[62,10,1516760],[21,57,399449],[30,70,1581936],[32,35.25,703228],[9,-80,1044987],[-6,147,46864],[-23,-58,735759],[-10,-76,4526977],[13,122,4140383],[52,20,6661991],
[39.5,-8,5643062],[25.5,51.25,514524],[-21.12,55.54,494595],[46,25,3529735],[60,100,23335550],[-2,30,133266],[17.9,-62.83,5507],[-15.95,-5.7,2166],[17.33,-62.75,6607],[13.88,-61.13,30288],
[18.07,-63.05,12324],[46.83,-56.33,3426],[13.25,-61.2,9674],[43.77,12.42,25292],[1,7,6771],[25,45,841469],[14,-14,89312],[44,21,2583470],[-4.58,55.67,51891],[8.5,-11.5,7985],
[1.37,103.8,3006155],[48.67,19.5,1877605],[46,15,1356546],[-8,159,25954],[10,49,27334],[-29,24,4076463],[37,127.5,34571873],[6.88,31.31,18819],[40,-4,13914811],[7,81,672754],
[15,30,63993],[4,-56,82588],[62,15,2754129],[47,8,4457868],[35,38,57423],[23.5,121,10241523],[39,71,17786],[-6,35,43223],[15,100,4770149],[-8.87,125.73,23460],
[8,1.17,39530],[11,-61,191496],[34,9,1153361],[39,35,17232066],[21.75,-71.58,6800],[-8,178,2943],[1,32,172159],[49,32,5557995],[24,54,1067030],[54,-2,24812582],
[38,-97,109563146],[-33,-56,1041346],[41,64,175081],[-16,167,12019],[8,-66,552695],[16,106,11624000],[24.5,-13,10],[15,48,11945],[-15,30,349842],[-20,30,266359],[41.9,12.45,29]
];

// Web Mercator at zoom 2, two device pixels per CSS pixel
const RAD = Math.PI / 180, SIZE = 2048, K = SIZE / (2 * Math.PI);
const X0 = 1072, Y0 = 1237, EARTH = 6371000;
const px = lng => X0 + lng * SIZE / 360;
const py = lat => Y0 - K * Math.asinh(Math.tan(lat * RAD));
const unpy = y => Math.atan(Math.sinh((Y0 - y) / K)) / RAD;
const layer = document.getElementById('outbreaks');

for (const [lat, lng, cases] of countries) {
  const latR = Math.sqrt(cases) * 400 / EARTH / RAD;
  const top = py(lat + latR), bottom = py(lat - latR), cy = (top + bottom) / 2;
  const lat2 = unpy(cy);
  const lngR = Math.acos((Math.cos(latR * RAD) - Math.sin(lat * RAD) * Math.sin(lat2 * RAD)) /
    (Math.cos(lat * RAD) * Math.cos(lat2 * RAD))) / RAD || 0;
  const snap = r => Math.max(Math.round(r / 2), 1) * 2;
  add(layer, 'ellipse', { cx: px(lng).toFixed(1), cy: cy.toFixed(1),
    rx: snap(lngR * SIZE / 360), ry: snap(cy - top) });
}

// Daily new cases, in thousands
const daily = [485,240,169,301,509,489,474,643,261,216,312,576,603,407,709,281,257,383,739,525,688,776,342,246,444,617,631,817,627,271,312,586,794,678,755,739,342,281,525,698,725,770,648,383,173,444,658,631,682,566,250,312,424,464,566,743,719,383,322,352,393,515,474,434,230,193,220,352,383,322,346,138,106,179,277,295,281,240,138,114,149,220,303,261,236,108,83,138,195,230,267,138,128,71,128,189,244,210,189,88,83,83,179,250,230,159,41,77,132,155,226,189,183,53,53,57,138,183,183];
const dates = ['Nov 11','Nov 19','Nov 27','Dec 5','Dec 13','Dec 21','Dec 29','Jan 6','Jan 14','Jan 22','Jan 30','Feb 7','Feb 15','Feb 23','Mar 3'];
const chart = document.getElementById('chart');
const L = 83, R = 673, T = 14, B = 211;
const pts = daily.map((v, i) => [L + i * (R - L) / (daily.length - 1), B - v / 900 * (B - T)]);
dates.forEach((d, i) => {
  const x = L + i * 40;
  add(chart, 'line', { class: i ? 'grid' : 'axis', x1: x, x2: x, y1: T, y2: B + 20 });
  add(chart, 'text', { 'text-anchor': 'end', transform: `translate(${x + 2} ${B + 25}) rotate(-50)`, y: 4 }, d);
});
for (let i = 0; i <= 9; i++)
  add(chart, 'text', { 'text-anchor': 'end', x: 64, y: B - i * (B - T) / 9 + 8 }, i ? i * 100 + 'k' : '0');

// Smooth the series with a tension of 0.4
const clamp = y => Math.min(B, Math.max(T, y));
const ctrl = pts.map((p, i) => {
  const a = pts[i - 1] || p, b = pts[i + 1] || p;
  const d1 = Math.hypot(p[0] - a[0], p[1] - a[1]), d2 = Math.hypot(b[0] - p[0], b[1] - p[1]);
  const f1 = .4 * d1 / (d1 + d2), f2 = .4 * d2 / (d1 + d2);
  return [p[0] - f1 * (b[0] - a[0]), clamp(p[1] - f1 * (b[1] - a[1])), p[0] + f2 * (b[0] - a[0]), clamp(p[1] + f2 * (b[1] - a[1]))];
});
let d = `M${pts[0]}`;
for (let i = 1; i < pts.length; i++)
  d += `C${ctrl[i - 1][2]} ${ctrl[i - 1][3]} ${ctrl[i][0]} ${ctrl[i][1]} ${pts[i]}`;
add(chart, 'path', { class: 'area', d: `${d}V${B}H${L}Z` });
add(chart, 'line', { class: 'axis', x1: L, x2: R, y1: B, y2: B });
add(chart, 'path', { class: 'line', d });
```
